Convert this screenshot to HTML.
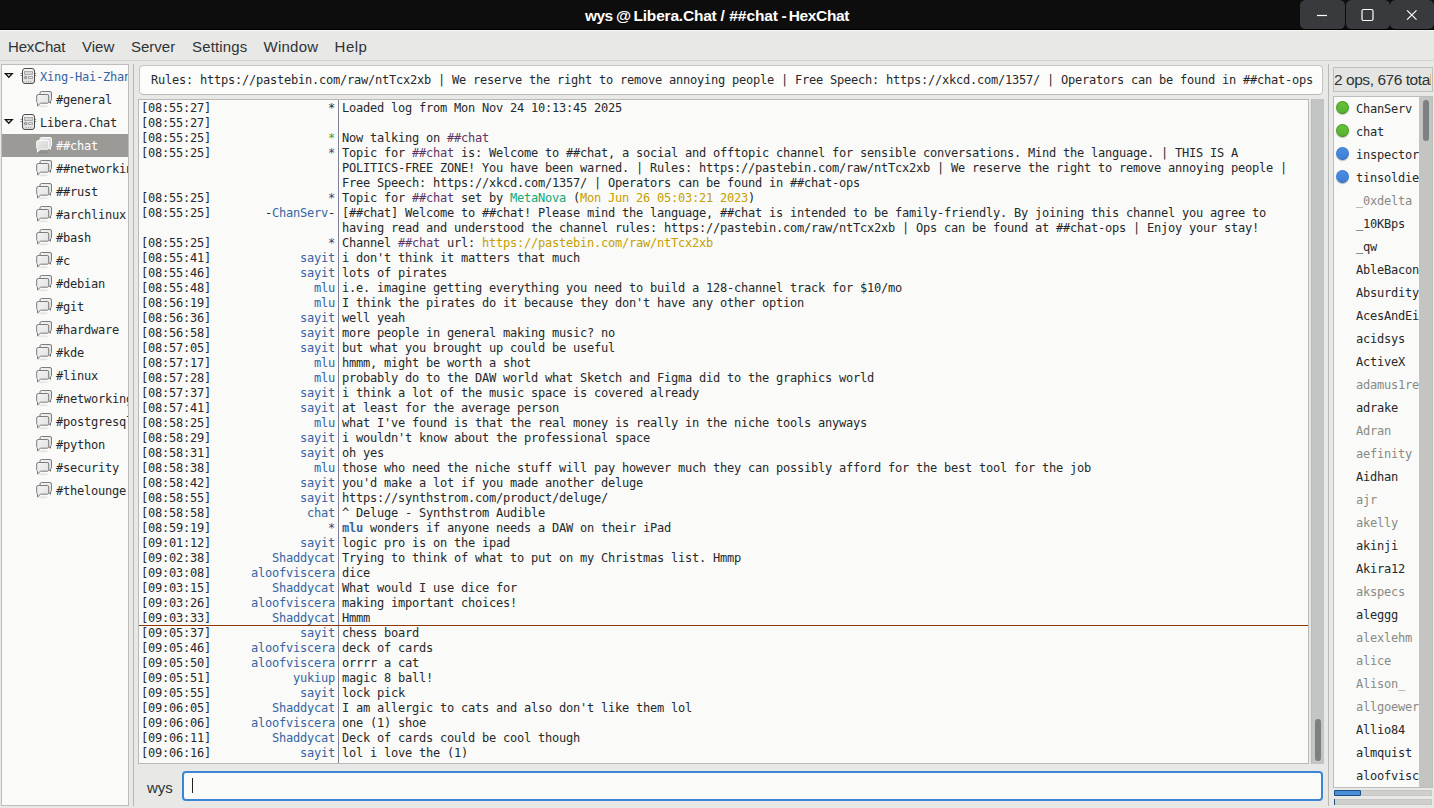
<!DOCTYPE html>
<html lang="en">
<head>
<meta charset="utf-8">
<title>wys @ Libera.Chat / ##chat - HexChat</title>
<style>
html,body{margin:0;padding:0;}
body{width:1434px;height:808px;overflow:hidden;background:#e8e8e7;position:relative;
 font-family:"Liberation Sans","DejaVu Sans",sans-serif;color:#2e3436;}
*{box-sizing:border-box;}
.abs{position:absolute;}
#titlebar{left:0;top:0;width:1434px;height:30px;background:#0d0d0d;border-bottom:1px solid #000;}
#title{left:0;top:0;width:1434px;height:30px;line-height:31px;color:#fff;font-weight:bold;font-size:15.500px;white-space:nowrap;}
#title span{position:absolute;top:0;}
.wb{top:0;height:29px;width:44px;background:#393a3e;border-radius:5.500px;}
.wb svg{position:absolute;left:0;top:0;}
#menubar{left:0;top:30px;width:1434px;height:31px;background:#e8e8e7;border-top:1px solid #f5f5f4;border-bottom:1px solid #d3d3d1;}
.mi{top:0;height:30px;line-height:32px;font-size:15px;color:#2e3436;white-space:nowrap;}
#tree{left:1px;top:64px;width:128px;height:742px;background:#fafaf9;border:1px solid #bdbdbb;overflow:hidden;}
.tr{position:relative;height:23px;width:126px;white-space:nowrap;overflow:hidden;}
.tr .tl{position:absolute;top:1px;line-height:23px;font-family:"DejaVu Sans Mono","Liberation Mono",monospace;font-size:12px;letter-spacing:-0.2246px;color:#25292b;}
.tr.srv .tl{left:38px;}
.tr.ch .tl{left:54px;}
.tr.sel{background:#9c9a96;}
.tr.sel .tl{color:#fff;}
.ico{position:absolute;left:0;top:0;}
.vsep{width:1px;background:#b8b8b6;}
#topic{left:139px;top:65px;width:1184px;height:30px;background:#fcfcfb;border:1px solid #c3c3c1;border-bottom-color:#b9b9b7;border-radius:4.500px;overflow:hidden;}
#topic span{position:absolute;left:11px;top:0;line-height:29px;white-space:nowrap;}
.mono{font-family:"DejaVu Sans Mono","Liberation Mono",monospace;font-size:12px;letter-spacing:-0.2246px;color:#25292b;}
#chat{left:138px;top:99px;width:1171px;height:665px;background:#fafaf8;border:1px solid #b9b9b7;overflow:hidden;}
.ln{position:relative;height:15px;line-height:15px;white-space:pre;}
.ln span{white-space:pre;}
.ts{position:absolute;left:2px;top:1px;}
.nk{position:absolute;right:973px;top:1px;}
.tx{position:absolute;left:203px;top:1px;}
#csep{left:199px;top:0;width:1px;height:663px;background:#807f95;}
#marker{left:0;top:525px;width:1169px;height:1px;background:#8f3902;}
#cscroll{left:1311px;top:99px;width:13px;height:665px;background:#c3c4c4;border-left:1px solid #b9baba;}
#cthumb{left:1315px;top:719px;width:6px;height:42px;background:#7d7f80;border-radius:3px;}
#nick{left:147px;top:772px;height:30px;line-height:32px;font-size:15px;color:#2e3436;}
#input{left:182px;top:771px;width:1141px;height:30px;background:#fbfbfa;border:2px solid #3d84d6;border-radius:4px;}
#caret{left:192px;top:778px;width:1px;height:15px;background:#222;}
#ubtn{left:1333px;top:67px;width:100px;height:25px;border:1px solid #c0c0be;background:#e4e4e2;overflow:hidden;}
#ubtn span{position:absolute;left:0;top:0;width:96.500px;overflow:hidden;line-height:24px;height:23px;font-size:15.500px;letter-spacing:-0.450px;white-space:nowrap;color:#2e3436;}
#ulist{left:1333px;top:96px;width:100px;height:692px;background:#fafaf9;border:1px solid #bdbdbb;overflow:hidden;}
.ur{position:relative;height:23px;width:85px;overflow:hidden;white-space:nowrap;}
.un{position:absolute;left:22px;top:0;line-height:24px;}
.dot{position:absolute;left:2px;top:4px;width:13px;height:13px;border-radius:50%;}
.dot.g{background:linear-gradient(#66c13a,#58b12e);border:1px solid #469a20;border-bottom-color:#3a8018;box-shadow:0 1px 1px rgba(60,90,40,.35);}
.dot.b{background:linear-gradient(#4a8de2,#3c7fd6);border:1px solid #3b7bd0;border-bottom-color:#2c62ad;box-shadow:0 1px 1px rgba(40,60,100,.35);}
#uscroll{left:1419px;top:97px;width:13px;height:690px;background:#c4c4c3;}
#uthumb{left:1423px;top:100px;width:6px;height:41px;background:#7d7f80;border-radius:3px;}
.pbar{left:1334px;width:98px;height:6px;background:#cfcfcd;border:1px solid #c6c6c4;}
</style>
</head>
<body>
<svg width="0" height="0" style="position:absolute;left:0;top:0"><defs>
<linearGradient id="sg" x1="0" y1="0" x2="0" y2="1"><stop offset="0" stop-color="#f7f7f7"/><stop offset="1" stop-color="#dededd"/></linearGradient>
<linearGradient id="cgn" x1="0" y1="0" x2="1" y2="1"><stop offset="0" stop-color="#f4f4f4"/><stop offset="1" stop-color="#e0e0e0"/></linearGradient>
<linearGradient id="cgs" x1="0" y1="0" x2="1" y2="1"><stop offset="0" stop-color="#ebebeb"/><stop offset="1" stop-color="#d2d2d2"/></linearGradient>
</defs></svg>
<div id="titlebar" class="abs"></div>
<div id="title" class="abs"><span style="left:585px;letter-spacing:-0.6px">wys</span> <span style="left:616px">@</span> <span style="left:633.500px;letter-spacing:-0.2px">Libera.Chat</span> <span style="left:720.500px">/</span> <span style="left:729.300px;letter-spacing:-0.08px">##chat</span> <span style="left:781.500px">-</span> <span style="left:788.800px;letter-spacing:-0.38px">HexChat</span></div>
<div class="abs wb" style="left:1300px;width:44.700px"><svg width="44" height="30" viewBox="0 0 44 30"><path d="M17 15.500h10" stroke="#fff" stroke-width="1.200"/></svg></div>
<div class="abs wb" style="left:1345.500px"><svg width="44" height="30" viewBox="0 0 44 30"><rect x="16" y="9.500" width="11" height="11" rx="1.500" fill="none" stroke="#fff" stroke-width="1.200"/></svg></div>
<div class="abs wb" style="left:1390.400px"><svg width="44" height="30" viewBox="0 0 44 30"><path d="M17.100 10.300l9.400 9.400M26.500 10.300l-9.400 9.400" stroke="#fff" stroke-width="1.200"/></svg></div>

<div id="menubar" class="abs">
<span class="abs mi" style="left:8px;letter-spacing:-0.15px">HexChat</span>
<span class="abs mi" style="left:82px">View</span>
<span class="abs mi" style="left:131px">Server</span>
<span class="abs mi" style="left:192px;letter-spacing:0.15px">Settings</span>
<span class="abs mi" style="left:263.500px;letter-spacing:0.25px">Window</span>
<span class="abs mi" style="left:334.600px;letter-spacing:0.45px">Help</span>
</div>

<div id="tree" class="abs">
<div class="tr srv"><svg class="ico" width="40" height="23" viewBox="0 0 40 23"><path d="M3.400 8.600h6.800l-3.400 3.700z" fill="none" stroke="#111" stroke-width="1.350" stroke-linejoin="miter"/><path d="M18.500 8.500h2M18.500 10.500h2M33 8.500h1.200M33 10.500h1.200" stroke="#8a8a8a" stroke-width="1"/><rect x="20.500" y="3.500" width="12" height="15" rx="2.500" fill="url(#sg)" stroke="#4a4a4a" stroke-width="1"/><rect x="22.500" y="6.500" width="8" height="3" fill="#d6d6d6" stroke="#a6a6a6" stroke-width=".9"/><circle cx="23.600" cy="12.500" r="1.200" fill="#cfcfcf" stroke="#707070" stroke-width=".9"/><rect x="26.500" y="11.500" width="4" height="2" fill="#e4e4e4" stroke="#a6a6a6" stroke-width=".9"/><path d="M24.300 16.200v1M26.500 16.200v1M28.700 16.200v1" stroke="#9a9a9a" stroke-width="1"/></svg><span class="tl" style="color:#3465a4">Xing-Hai-Zhang</span></div>
<div class="tr ch"><svg class="ico" width="56" height="23" viewBox="0 0 56 23"><ellipse cx="41" cy="18.200" rx="5" ry="1" fill="#e6e6e5"/><path d="M39.500 3.500h8.500a1.500 1.500 0 0 1 1.500 1.500v6.500a1.500 1.500 0 0 1 -1 1.400v2.400l-2.300 -2.300h-6.700a1.500 1.500 0 0 1 -1.500 -1.500v-6.500a1.500 1.500 0 0 1 1.500 -1.500z" fill="url(#cgn)" stroke="#7c7c7c" stroke-width="1"/><path d="M36.200 6.500h9a1.500 1.500 0 0 1 1.500 1.500v5.700a1.500 1.500 0 0 1 -1.500 1.500h-6.700l-3 2.800v-2.900a1.500 1.500 0 0 1 -0.800 -1.400v-5.700a1.500 1.500 0 0 1 1.500 -1.500z" fill="url(#cgn)" stroke="#7c7c7c" stroke-width="1"/></svg><span class="tl">#general</span></div>
<div class="tr srv"><svg class="ico" width="40" height="23" viewBox="0 0 40 23"><path d="M3.400 8.600h6.800l-3.400 3.700z" fill="none" stroke="#111" stroke-width="1.350" stroke-linejoin="miter"/><path d="M18.500 8.500h2M18.500 10.500h2M33 8.500h1.200M33 10.500h1.200" stroke="#8a8a8a" stroke-width="1"/><rect x="20.500" y="3.500" width="12" height="15" rx="2.500" fill="url(#sg)" stroke="#4a4a4a" stroke-width="1"/><rect x="22.500" y="6.500" width="8" height="3" fill="#d6d6d6" stroke="#a6a6a6" stroke-width=".9"/><circle cx="23.600" cy="12.500" r="1.200" fill="#cfcfcf" stroke="#707070" stroke-width=".9"/><rect x="26.500" y="11.500" width="4" height="2" fill="#e4e4e4" stroke="#a6a6a6" stroke-width=".9"/><path d="M24.300 16.200v1M26.500 16.200v1M28.700 16.200v1" stroke="#9a9a9a" stroke-width="1"/></svg><span class="tl">Libera.Chat</span></div>
<div class="tr ch sel"><svg class="ico" width="56" height="23" viewBox="0 0 56 23"><ellipse cx="41" cy="18.200" rx="5" ry="1" fill="#8e8d89"/><path d="M39.500 3.500h8.500a1.500 1.500 0 0 1 1.500 1.500v6.500a1.500 1.500 0 0 1 -1 1.400v2.400l-2.300 -2.300h-6.700a1.500 1.500 0 0 1 -1.500 -1.500v-6.500a1.500 1.500 0 0 1 1.500 -1.500z" fill="url(#cgs)" stroke="#fbfbfb" stroke-width="1"/><path d="M36.200 6.500h9a1.500 1.500 0 0 1 1.500 1.500v5.700a1.500 1.500 0 0 1 -1.500 1.500h-6.700l-3 2.800v-2.900a1.500 1.500 0 0 1 -0.800 -1.400v-5.700a1.500 1.500 0 0 1 1.500 -1.500z" fill="url(#cgs)" stroke="#fbfbfb" stroke-width="1"/></svg><span class="tl">##chat</span></div>
<div class="tr ch"><svg class="ico" width="56" height="23" viewBox="0 0 56 23"><ellipse cx="41" cy="18.200" rx="5" ry="1" fill="#e6e6e5"/><path d="M39.500 3.500h8.500a1.500 1.500 0 0 1 1.500 1.500v6.500a1.500 1.500 0 0 1 -1 1.400v2.400l-2.300 -2.300h-6.700a1.500 1.500 0 0 1 -1.500 -1.500v-6.500a1.500 1.500 0 0 1 1.500 -1.500z" fill="url(#cgn)" stroke="#7c7c7c" stroke-width="1"/><path d="M36.200 6.500h9a1.500 1.500 0 0 1 1.500 1.500v5.700a1.500 1.500 0 0 1 -1.500 1.500h-6.700l-3 2.800v-2.900a1.500 1.500 0 0 1 -0.800 -1.400v-5.700a1.500 1.500 0 0 1 1.500 -1.500z" fill="url(#cgn)" stroke="#7c7c7c" stroke-width="1"/></svg><span class="tl">##networking</span></div>
<div class="tr ch"><svg class="ico" width="56" height="23" viewBox="0 0 56 23"><ellipse cx="41" cy="18.200" rx="5" ry="1" fill="#e6e6e5"/><path d="M39.500 3.500h8.500a1.500 1.500 0 0 1 1.500 1.500v6.500a1.500 1.500 0 0 1 -1 1.400v2.400l-2.300 -2.300h-6.700a1.500 1.500 0 0 1 -1.500 -1.500v-6.500a1.500 1.500 0 0 1 1.500 -1.500z" fill="url(#cgn)" stroke="#7c7c7c" stroke-width="1"/><path d="M36.200 6.500h9a1.500 1.500 0 0 1 1.500 1.500v5.700a1.500 1.500 0 0 1 -1.500 1.500h-6.700l-3 2.800v-2.900a1.500 1.500 0 0 1 -0.800 -1.400v-5.700a1.500 1.500 0 0 1 1.500 -1.500z" fill="url(#cgn)" stroke="#7c7c7c" stroke-width="1"/></svg><span class="tl">##rust</span></div>
<div class="tr ch"><svg class="ico" width="56" height="23" viewBox="0 0 56 23"><ellipse cx="41" cy="18.200" rx="5" ry="1" fill="#e6e6e5"/><path d="M39.500 3.500h8.500a1.500 1.500 0 0 1 1.500 1.500v6.500a1.500 1.500 0 0 1 -1 1.400v2.400l-2.300 -2.300h-6.700a1.500 1.500 0 0 1 -1.500 -1.500v-6.500a1.500 1.500 0 0 1 1.500 -1.500z" fill="url(#cgn)" stroke="#7c7c7c" stroke-width="1"/><path d="M36.200 6.500h9a1.500 1.500 0 0 1 1.500 1.500v5.700a1.500 1.500 0 0 1 -1.500 1.500h-6.700l-3 2.800v-2.900a1.500 1.500 0 0 1 -0.800 -1.400v-5.700a1.500 1.500 0 0 1 1.500 -1.500z" fill="url(#cgn)" stroke="#7c7c7c" stroke-width="1"/></svg><span class="tl">#archlinux</span></div>
<div class="tr ch"><svg class="ico" width="56" height="23" viewBox="0 0 56 23"><ellipse cx="41" cy="18.200" rx="5" ry="1" fill="#e6e6e5"/><path d="M39.500 3.500h8.500a1.500 1.500 0 0 1 1.500 1.500v6.500a1.500 1.500 0 0 1 -1 1.400v2.400l-2.300 -2.300h-6.700a1.500 1.500 0 0 1 -1.500 -1.500v-6.500a1.500 1.500 0 0 1 1.500 -1.500z" fill="url(#cgn)" stroke="#7c7c7c" stroke-width="1"/><path d="M36.200 6.500h9a1.500 1.500 0 0 1 1.500 1.500v5.700a1.500 1.500 0 0 1 -1.500 1.500h-6.700l-3 2.800v-2.900a1.500 1.500 0 0 1 -0.800 -1.400v-5.700a1.500 1.500 0 0 1 1.500 -1.500z" fill="url(#cgn)" stroke="#7c7c7c" stroke-width="1"/></svg><span class="tl">#bash</span></div>
<div class="tr ch"><svg class="ico" width="56" height="23" viewBox="0 0 56 23"><ellipse cx="41" cy="18.200" rx="5" ry="1" fill="#e6e6e5"/><path d="M39.500 3.500h8.500a1.500 1.500 0 0 1 1.500 1.500v6.500a1.500 1.500 0 0 1 -1 1.400v2.400l-2.300 -2.300h-6.700a1.500 1.500 0 0 1 -1.500 -1.500v-6.500a1.500 1.500 0 0 1 1.500 -1.500z" fill="url(#cgn)" stroke="#7c7c7c" stroke-width="1"/><path d="M36.200 6.500h9a1.500 1.500 0 0 1 1.500 1.500v5.700a1.500 1.500 0 0 1 -1.500 1.500h-6.700l-3 2.800v-2.900a1.500 1.500 0 0 1 -0.800 -1.400v-5.700a1.500 1.500 0 0 1 1.500 -1.500z" fill="url(#cgn)" stroke="#7c7c7c" stroke-width="1"/></svg><span class="tl">#c</span></div>
<div class="tr ch"><svg class="ico" width="56" height="23" viewBox="0 0 56 23"><ellipse cx="41" cy="18.200" rx="5" ry="1" fill="#e6e6e5"/><path d="M39.500 3.500h8.500a1.500 1.500 0 0 1 1.500 1.500v6.500a1.500 1.500 0 0 1 -1 1.400v2.400l-2.300 -2.300h-6.700a1.500 1.500 0 0 1 -1.500 -1.500v-6.500a1.500 1.500 0 0 1 1.500 -1.500z" fill="url(#cgn)" stroke="#7c7c7c" stroke-width="1"/><path d="M36.200 6.500h9a1.500 1.500 0 0 1 1.500 1.500v5.700a1.500 1.500 0 0 1 -1.500 1.500h-6.700l-3 2.800v-2.900a1.500 1.500 0 0 1 -0.800 -1.400v-5.700a1.500 1.500 0 0 1 1.500 -1.500z" fill="url(#cgn)" stroke="#7c7c7c" stroke-width="1"/></svg><span class="tl">#debian</span></div>
<div class="tr ch"><svg class="ico" width="56" height="23" viewBox="0 0 56 23"><ellipse cx="41" cy="18.200" rx="5" ry="1" fill="#e6e6e5"/><path d="M39.500 3.500h8.500a1.500 1.500 0 0 1 1.500 1.500v6.500a1.500 1.500 0 0 1 -1 1.400v2.400l-2.300 -2.300h-6.700a1.500 1.500 0 0 1 -1.500 -1.500v-6.500a1.500 1.500 0 0 1 1.500 -1.500z" fill="url(#cgn)" stroke="#7c7c7c" stroke-width="1"/><path d="M36.200 6.500h9a1.500 1.500 0 0 1 1.500 1.500v5.700a1.500 1.500 0 0 1 -1.500 1.500h-6.700l-3 2.800v-2.900a1.500 1.500 0 0 1 -0.800 -1.400v-5.700a1.500 1.500 0 0 1 1.500 -1.500z" fill="url(#cgn)" stroke="#7c7c7c" stroke-width="1"/></svg><span class="tl">#git</span></div>
<div class="tr ch"><svg class="ico" width="56" height="23" viewBox="0 0 56 23"><ellipse cx="41" cy="18.200" rx="5" ry="1" fill="#e6e6e5"/><path d="M39.500 3.500h8.500a1.500 1.500 0 0 1 1.500 1.500v6.500a1.500 1.500 0 0 1 -1 1.400v2.400l-2.300 -2.300h-6.700a1.500 1.500 0 0 1 -1.500 -1.500v-6.500a1.500 1.500 0 0 1 1.500 -1.500z" fill="url(#cgn)" stroke="#7c7c7c" stroke-width="1"/><path d="M36.200 6.500h9a1.500 1.500 0 0 1 1.500 1.500v5.700a1.500 1.500 0 0 1 -1.500 1.500h-6.700l-3 2.800v-2.900a1.500 1.500 0 0 1 -0.800 -1.400v-5.700a1.500 1.500 0 0 1 1.500 -1.500z" fill="url(#cgn)" stroke="#7c7c7c" stroke-width="1"/></svg><span class="tl">#hardware</span></div>
<div class="tr ch"><svg class="ico" width="56" height="23" viewBox="0 0 56 23"><ellipse cx="41" cy="18.200" rx="5" ry="1" fill="#e6e6e5"/><path d="M39.500 3.500h8.500a1.500 1.500 0 0 1 1.500 1.500v6.500a1.500 1.500 0 0 1 -1 1.400v2.400l-2.300 -2.300h-6.700a1.500 1.500 0 0 1 -1.500 -1.500v-6.500a1.500 1.500 0 0 1 1.500 -1.500z" fill="url(#cgn)" stroke="#7c7c7c" stroke-width="1"/><path d="M36.200 6.500h9a1.500 1.500 0 0 1 1.500 1.500v5.700a1.500 1.500 0 0 1 -1.500 1.500h-6.700l-3 2.800v-2.900a1.500 1.500 0 0 1 -0.800 -1.400v-5.700a1.500 1.500 0 0 1 1.500 -1.500z" fill="url(#cgn)" stroke="#7c7c7c" stroke-width="1"/></svg><span class="tl">#kde</span></div>
<div class="tr ch"><svg class="ico" width="56" height="23" viewBox="0 0 56 23"><ellipse cx="41" cy="18.200" rx="5" ry="1" fill="#e6e6e5"/><path d="M39.500 3.500h8.500a1.500 1.500 0 0 1 1.500 1.500v6.500a1.500 1.500 0 0 1 -1 1.400v2.400l-2.300 -2.300h-6.700a1.500 1.500 0 0 1 -1.500 -1.500v-6.500a1.500 1.500 0 0 1 1.500 -1.500z" fill="url(#cgn)" stroke="#7c7c7c" stroke-width="1"/><path d="M36.200 6.500h9a1.500 1.500 0 0 1 1.500 1.500v5.700a1.500 1.500 0 0 1 -1.500 1.500h-6.700l-3 2.800v-2.900a1.500 1.500 0 0 1 -0.800 -1.400v-5.700a1.500 1.500 0 0 1 1.500 -1.500z" fill="url(#cgn)" stroke="#7c7c7c" stroke-width="1"/></svg><span class="tl">#linux</span></div>
<div class="tr ch"><svg class="ico" width="56" height="23" viewBox="0 0 56 23"><ellipse cx="41" cy="18.200" rx="5" ry="1" fill="#e6e6e5"/><path d="M39.500 3.500h8.500a1.500 1.500 0 0 1 1.500 1.500v6.500a1.500 1.500 0 0 1 -1 1.400v2.400l-2.300 -2.300h-6.700a1.500 1.500 0 0 1 -1.500 -1.500v-6.500a1.500 1.500 0 0 1 1.500 -1.500z" fill="url(#cgn)" stroke="#7c7c7c" stroke-width="1"/><path d="M36.200 6.500h9a1.500 1.500 0 0 1 1.500 1.500v5.700a1.500 1.500 0 0 1 -1.500 1.500h-6.700l-3 2.800v-2.900a1.500 1.500 0 0 1 -0.800 -1.400v-5.700a1.500 1.500 0 0 1 1.500 -1.500z" fill="url(#cgn)" stroke="#7c7c7c" stroke-width="1"/></svg><span class="tl">#networking</span></div>
<div class="tr ch"><svg class="ico" width="56" height="23" viewBox="0 0 56 23"><ellipse cx="41" cy="18.200" rx="5" ry="1" fill="#e6e6e5"/><path d="M39.500 3.500h8.500a1.500 1.500 0 0 1 1.500 1.500v6.500a1.500 1.500 0 0 1 -1 1.400v2.400l-2.300 -2.300h-6.700a1.500 1.500 0 0 1 -1.500 -1.500v-6.500a1.500 1.500 0 0 1 1.500 -1.500z" fill="url(#cgn)" stroke="#7c7c7c" stroke-width="1"/><path d="M36.200 6.500h9a1.500 1.500 0 0 1 1.500 1.500v5.700a1.500 1.500 0 0 1 -1.500 1.500h-6.700l-3 2.800v-2.900a1.500 1.500 0 0 1 -0.800 -1.400v-5.700a1.500 1.500 0 0 1 1.500 -1.500z" fill="url(#cgn)" stroke="#7c7c7c" stroke-width="1"/></svg><span class="tl">#postgresql</span></div>
<div class="tr ch"><svg class="ico" width="56" height="23" viewBox="0 0 56 23"><ellipse cx="41" cy="18.200" rx="5" ry="1" fill="#e6e6e5"/><path d="M39.500 3.500h8.500a1.500 1.500 0 0 1 1.500 1.500v6.500a1.500 1.500 0 0 1 -1 1.400v2.400l-2.300 -2.300h-6.700a1.500 1.500 0 0 1 -1.500 -1.500v-6.500a1.500 1.500 0 0 1 1.500 -1.500z" fill="url(#cgn)" stroke="#7c7c7c" stroke-width="1"/><path d="M36.200 6.500h9a1.500 1.500 0 0 1 1.500 1.500v5.700a1.500 1.500 0 0 1 -1.500 1.500h-6.700l-3 2.800v-2.900a1.500 1.500 0 0 1 -0.800 -1.400v-5.700a1.500 1.500 0 0 1 1.500 -1.500z" fill="url(#cgn)" stroke="#7c7c7c" stroke-width="1"/></svg><span class="tl">#python</span></div>
<div class="tr ch"><svg class="ico" width="56" height="23" viewBox="0 0 56 23"><ellipse cx="41" cy="18.200" rx="5" ry="1" fill="#e6e6e5"/><path d="M39.500 3.500h8.500a1.500 1.500 0 0 1 1.500 1.500v6.500a1.500 1.500 0 0 1 -1 1.400v2.400l-2.300 -2.300h-6.700a1.500 1.500 0 0 1 -1.500 -1.500v-6.500a1.500 1.500 0 0 1 1.500 -1.500z" fill="url(#cgn)" stroke="#7c7c7c" stroke-width="1"/><path d="M36.200 6.500h9a1.500 1.500 0 0 1 1.500 1.500v5.700a1.500 1.500 0 0 1 -1.500 1.500h-6.700l-3 2.800v-2.900a1.500 1.500 0 0 1 -0.800 -1.400v-5.700a1.500 1.500 0 0 1 1.500 -1.500z" fill="url(#cgn)" stroke="#7c7c7c" stroke-width="1"/></svg><span class="tl">#security</span></div>
<div class="tr ch"><svg class="ico" width="56" height="23" viewBox="0 0 56 23"><ellipse cx="41" cy="18.200" rx="5" ry="1" fill="#e6e6e5"/><path d="M39.500 3.500h8.500a1.500 1.500 0 0 1 1.500 1.500v6.500a1.500 1.500 0 0 1 -1 1.400v2.400l-2.300 -2.300h-6.700a1.500 1.500 0 0 1 -1.500 -1.500v-6.500a1.500 1.500 0 0 1 1.500 -1.500z" fill="url(#cgn)" stroke="#7c7c7c" stroke-width="1"/><path d="M36.200 6.500h9a1.500 1.500 0 0 1 1.500 1.500v5.700a1.500 1.500 0 0 1 -1.500 1.500h-6.700l-3 2.800v-2.900a1.500 1.500 0 0 1 -0.800 -1.400v-5.700a1.500 1.500 0 0 1 1.500 -1.500z" fill="url(#cgn)" stroke="#7c7c7c" stroke-width="1"/></svg><span class="tl">#thelounge</span></div>
</div>
<div class="abs vsep" style="left:133px;top:64px;height:742px"></div>

<div id="topic" class="abs"><span class="mono">Rules: https://pastebin.com/raw/ntTcx2xb | We reserve the right to remove annoying people | Free Speech: https://xkcd.com/1357/ | Operators can be found in ##chat-ops</span></div>

<div id="chat" class="abs mono">
<div class="ln"><span class="ts">[08:55:27]</span><span class="nk"><span style="color:#2f2f3a">*</span></span><span class="tx">Loaded log from Mon Nov 24 10:13:45 2025</span></div>
<div class="ln"><span class="ts">[08:55:27]</span><span class="nk"></span><span class="tx"></span></div>
<div class="ln"><span class="ts">[08:55:25]</span><span class="nk"><span style="color:#4e9a06">*</span></span><span class="tx">Now talking on <span style="color:#5c3566">##chat</span></span></div>
<div class="ln"><span class="ts">[08:55:25]</span><span class="nk"><span style="color:#5c3566">*</span></span><span class="tx">Topic for <span style="color:#5c3566">##chat</span> is: Welcome to ##chat, a social and offtopic channel for sensible conversations. Mind the language. | THIS IS A</span></div>
<div class="ln"><span class="ts"></span><span class="nk"></span><span class="tx">POLITICS-FREE ZONE! You have been warned. | Rules: https://pastebin.com/raw/ntTcx2xb | We reserve the right to remove annoying people |</span></div>
<div class="ln"><span class="ts"></span><span class="nk"></span><span class="tx">Free Speech: https://xkcd.com/1357/ | Operators can be found in ##chat-ops</span></div>
<div class="ln"><span class="ts">[08:55:25]</span><span class="nk"><span style="color:#5c3566">*</span></span><span class="tx">Topic for <span style="color:#5c3566">##chat</span> set by <span style="color:#11a879">MetaNova</span> (<span style="color:#c4a000">Mon Jun 26 05:03:21 2023</span>)</span></div>
<div class="ln"><span class="ts">[08:55:25]</span><span class="nk">-<span style="color:#3465a4">ChanServ</span>-</span><span class="tx">[##chat] Welcome to ##chat! Please mind the language, ##chat is intended to be family-friendly. By joining this channel you agree to</span></div>
<div class="ln"><span class="ts"></span><span class="nk"></span><span class="tx">having read and understood the channel rules: https://pastebin.com/raw/ntTcx2xb | Ops can be found at ##chat-ops | Enjoy your stay!</span></div>
<div class="ln"><span class="ts">[08:55:25]</span><span class="nk"><span style="color:#5c3566">*</span></span><span class="tx">Channel <span style="color:#5c3566">##chat</span> url: <span style="color:#c4a000">https://pastebin.com/raw/ntTcx2xb</span></span></div>
<div class="ln"><span class="ts">[08:55:41]</span><span class="nk"><span style="color:#3465a4">sayit</span></span><span class="tx">i don&#x27;t think it matters that much</span></div>
<div class="ln"><span class="ts">[08:55:46]</span><span class="nk"><span style="color:#3465a4">sayit</span></span><span class="tx">lots of pirates</span></div>
<div class="ln"><span class="ts">[08:55:48]</span><span class="nk"><span style="color:#3465a4">mlu</span></span><span class="tx">i.e. imagine getting everything you need to build a 128-channel track for $10/mo</span></div>
<div class="ln"><span class="ts">[08:56:19]</span><span class="nk"><span style="color:#3465a4">mlu</span></span><span class="tx">I think the pirates do it because they don&#x27;t have any other option</span></div>
<div class="ln"><span class="ts">[08:56:36]</span><span class="nk"><span style="color:#3465a4">sayit</span></span><span class="tx">well yeah</span></div>
<div class="ln"><span class="ts">[08:56:58]</span><span class="nk"><span style="color:#3465a4">sayit</span></span><span class="tx">more people in general making music? no</span></div>
<div class="ln"><span class="ts">[08:57:05]</span><span class="nk"><span style="color:#3465a4">sayit</span></span><span class="tx">but what you brought up could be useful</span></div>
<div class="ln"><span class="ts">[08:57:17]</span><span class="nk"><span style="color:#3465a4">mlu</span></span><span class="tx">hmmm, might be worth a shot</span></div>
<div class="ln"><span class="ts">[08:57:28]</span><span class="nk"><span style="color:#3465a4">mlu</span></span><span class="tx">probably do to the DAW world what Sketch and Figma did to the graphics world</span></div>
<div class="ln"><span class="ts">[08:57:37]</span><span class="nk"><span style="color:#3465a4">sayit</span></span><span class="tx">i think a lot of the music space is covered already</span></div>
<div class="ln"><span class="ts">[08:57:41]</span><span class="nk"><span style="color:#3465a4">sayit</span></span><span class="tx">at least for the average person</span></div>
<div class="ln"><span class="ts">[08:58:25]</span><span class="nk"><span style="color:#3465a4">mlu</span></span><span class="tx">what I&#x27;ve found is that the real money is really in the niche tools anyways</span></div>
<div class="ln"><span class="ts">[08:58:29]</span><span class="nk"><span style="color:#3465a4">sayit</span></span><span class="tx">i wouldn&#x27;t know about the professional space</span></div>
<div class="ln"><span class="ts">[08:58:31]</span><span class="nk"><span style="color:#3465a4">sayit</span></span><span class="tx">oh yes</span></div>
<div class="ln"><span class="ts">[08:58:38]</span><span class="nk"><span style="color:#3465a4">mlu</span></span><span class="tx">those who need the niche stuff will pay however much they can possibly afford for the best tool for the job</span></div>
<div class="ln"><span class="ts">[08:58:42]</span><span class="nk"><span style="color:#3465a4">sayit</span></span><span class="tx">you&#x27;d make a lot if you made another deluge</span></div>
<div class="ln"><span class="ts">[08:58:55]</span><span class="nk"><span style="color:#3465a4">sayit</span></span><span class="tx">https://synthstrom.com/product/deluge/</span></div>
<div class="ln"><span class="ts">[08:58:58]</span><span class="nk"><span style="color:#3465a4">chat</span></span><span class="tx">^ Deluge - Synthstrom Audible</span></div>
<div class="ln"><span class="ts">[08:59:19]</span><span class="nk"><span style="color:#5c3566">*</span></span><span class="tx"><span style="color:#3465a4;font-weight:bold">mlu</span> wonders if anyone needs a DAW on their iPad</span></div>
<div class="ln"><span class="ts">[09:01:12]</span><span class="nk"><span style="color:#3465a4">sayit</span></span><span class="tx">logic pro is on the ipad</span></div>
<div class="ln"><span class="ts">[09:02:38]</span><span class="nk"><span style="color:#3465a4">Shaddycat</span></span><span class="tx">Trying to think of what to put on my Christmas list. Hmmp</span></div>
<div class="ln"><span class="ts">[09:03:08]</span><span class="nk"><span style="color:#3465a4">aloofviscera</span></span><span class="tx">dice</span></div>
<div class="ln"><span class="ts">[09:03:15]</span><span class="nk"><span style="color:#3465a4">Shaddycat</span></span><span class="tx">What would I use dice for</span></div>
<div class="ln"><span class="ts">[09:03:26]</span><span class="nk"><span style="color:#3465a4">aloofviscera</span></span><span class="tx">making important choices!</span></div>
<div class="ln"><span class="ts">[09:03:33]</span><span class="nk"><span style="color:#3465a4">Shaddycat</span></span><span class="tx">Hmmm</span></div>
<div class="ln"><span class="ts">[09:05:37]</span><span class="nk"><span style="color:#3465a4">sayit</span></span><span class="tx">chess board</span></div>
<div class="ln"><span class="ts">[09:05:46]</span><span class="nk"><span style="color:#3465a4">aloofviscera</span></span><span class="tx">deck of cards</span></div>
<div class="ln"><span class="ts">[09:05:50]</span><span class="nk"><span style="color:#3465a4">aloofviscera</span></span><span class="tx">orrrr a cat</span></div>
<div class="ln"><span class="ts">[09:05:51]</span><span class="nk"><span style="color:#3465a4">yukiup</span></span><span class="tx">magic 8 ball!</span></div>
<div class="ln"><span class="ts">[09:05:55]</span><span class="nk"><span style="color:#3465a4">sayit</span></span><span class="tx">lock pick</span></div>
<div class="ln"><span class="ts">[09:06:05]</span><span class="nk"><span style="color:#3465a4">Shaddycat</span></span><span class="tx">I am allergic to cats and also don&#x27;t like them lol</span></div>
<div class="ln"><span class="ts">[09:06:06]</span><span class="nk"><span style="color:#3465a4">aloofviscera</span></span><span class="tx">one (1) shoe</span></div>
<div class="ln"><span class="ts">[09:06:11]</span><span class="nk"><span style="color:#3465a4">Shaddycat</span></span><span class="tx">Deck of cards could be cool though</span></div>
<div class="ln"><span class="ts">[09:06:16]</span><span class="nk"><span style="color:#3465a4">sayit</span></span><span class="tx">lol i love the (1)</span></div>
<div id="csep" class="abs"></div>
<div id="marker" class="abs"></div>
</div>
<div id="cscroll" class="abs"></div>
<div id="cthumb" class="abs"></div>

<div id="nick" class="abs">wys</div>
<div id="input" class="abs"></div>
<div id="caret" class="abs"></div>

<div class="abs vsep" style="left:1328px;top:64px;height:742px"></div>
<div id="ubtn" class="abs"><span>2 ops, 676 total</span></div>
<div id="ulist" class="abs mono">
<div class="ur"><span class="dot g"></span><span class="un">ChanServ</span></div>
<div class="ur"><span class="dot g"></span><span class="un">chat</span></div>
<div class="ur"><span class="dot b"></span><span class="un">inspector</span></div>
<div class="ur"><span class="dot b"></span><span class="un">tinsoldier</span></div>
<div class="ur"><span class="un" style="color:#888a85">_0xdelta</span></div>
<div class="ur"><span class="un">_10KBps</span></div>
<div class="ur"><span class="un">_qw</span></div>
<div class="ur"><span class="un">AbleBacon</span></div>
<div class="ur"><span class="un">Absurdity</span></div>
<div class="ur"><span class="un">AcesAndEights</span></div>
<div class="ur"><span class="un">acidsys</span></div>
<div class="ur"><span class="un">ActiveX</span></div>
<div class="ur"><span class="un" style="color:#888a85">adamus1red</span></div>
<div class="ur"><span class="un">adrake</span></div>
<div class="ur"><span class="un" style="color:#888a85">Adran</span></div>
<div class="ur"><span class="un" style="color:#888a85">aefinity</span></div>
<div class="ur"><span class="un">Aidhan</span></div>
<div class="ur"><span class="un" style="color:#888a85">ajr</span></div>
<div class="ur"><span class="un" style="color:#888a85">akelly</span></div>
<div class="ur"><span class="un">akinji</span></div>
<div class="ur"><span class="un">Akira12</span></div>
<div class="ur"><span class="un" style="color:#888a85">akspecs</span></div>
<div class="ur"><span class="un">aleggg</span></div>
<div class="ur"><span class="un" style="color:#888a85">alexlehm</span></div>
<div class="ur"><span class="un" style="color:#888a85">alice</span></div>
<div class="ur"><span class="un" style="color:#888a85">Alison_</span></div>
<div class="ur"><span class="un" style="color:#888a85">allgoewer</span></div>
<div class="ur"><span class="un">Allio84</span></div>
<div class="ur"><span class="un">almquist</span></div>
<div class="ur"><span class="un">aloofviscera</span></div>
</div>
<div id="uscroll" class="abs"></div>
<div id="uthumb" class="abs"></div>
<div class="abs pbar" style="top:790px"></div><div class="abs" style="left:1334px;top:790px;width:27px;height:6px;background:#4a90d9;border:1px solid #1f4f82;border-radius:1px"></div>
<div class="abs pbar" style="top:799px"></div><div class="abs" style="left:1334px;top:799px;width:1px;height:6px;background:#1f4f82"></div>
</body>
</html>
